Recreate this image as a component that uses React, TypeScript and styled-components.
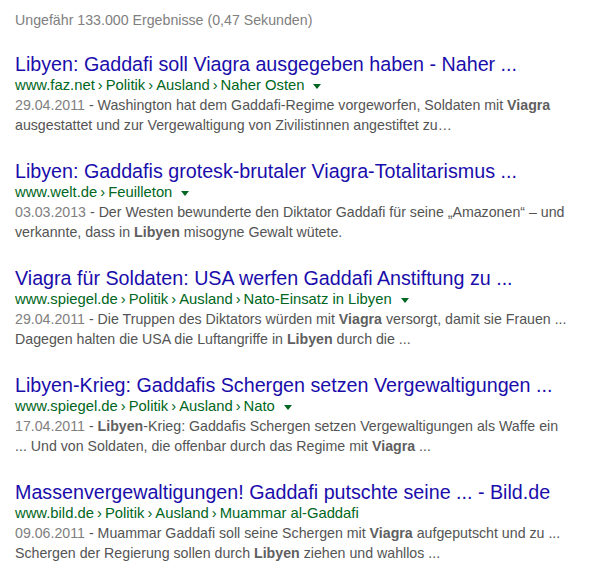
import React from "react";
import styled, { createGlobalStyle } from "styled-components";

const GlobalStyle = createGlobalStyle`
  body {
    margin: 0;
    background: #fff;
    font-family: "Liberation Sans", Arial, sans-serif;
  }
`;

const Page = styled.div`
  padding: 10px 15px 0 15px;
`;

const Stats = styled.div`
  font-size: 14.2px;
  line-height: 20px;
  color: #808080;
  margin-bottom: 23px;
`;

const ResultList = styled.div`
  display: flex;
  flex-direction: column;
  gap: 25px;
`;

const Result = styled.div`
  display: flex;
  flex-direction: column;
`;

const Title = styled.a`
  font-size: 19.7px;
  line-height: 23px;
  color: #1a0dab;
  text-decoration: none;
  white-space: nowrap;
`;

const UrlRow = styled.div`
  display: flex;
  align-items: center;
  font-size: 14.8px;
  line-height: 19px;
  color: #006621;
  white-space: nowrap;
`;

const Sep = styled.span`
  margin: 0 3px;
`;

const Arrow = styled.span`
  display: inline-block;
  margin-left: 9px;
  margin-top: 1px;
  border-top: 5px solid #006621;
  border-left: 4.5px solid transparent;
  border-right: 4.5px solid transparent;
  width: 0;
  height: 0;
`;

const Snippet = styled.div`
  font-size: 14.2px;
  line-height: 20px;
  color: #545454;

  b {
    color: #5f5f5f;
  }
`;

const Date = styled.span`
  color: #808080;
`;

type Item = {
  title: string;
  crumbs: string[];
  arrow: boolean;
  date: string;
  lines: React.ReactNode[];
};

const items: Item[] = [
  {
    title: "Libyen: Gaddafi soll Viagra ausgegeben haben - Naher ...",
    crumbs: ["www.faz.net", "Politik", "Ausland", "Naher Osten"],
    arrow: true,
    date: "29.04.2011",
    lines: [
      <>
        Washington hat dem Gaddafi-Regime vorgeworfen, Soldaten mit <b>Viagra</b>
      </>,
      <>ausgestattet und zur Vergewaltigung von Zivilistinnen angestiftet zu…</>,
    ],
  },
  {
    title: "Libyen: Gaddafis grotesk-brutaler Viagra-Totalitarismus ...",
    crumbs: ["www.welt.de", "Feuilleton"],
    arrow: true,
    date: "03.03.2013",
    lines: [
      <>Der Westen bewunderte den Diktator Gaddafi für seine „Amazonen“ – und</>,
      <>
        verkannte, dass in <b>Libyen</b> misogyne Gewalt wütete.
      </>,
    ],
  },
  {
    title: "Viagra für Soldaten: USA werfen Gaddafi Anstiftung zu ...",
    crumbs: ["www.spiegel.de", "Politik", "Ausland", "Nato-Einsatz in Libyen"],
    arrow: true,
    date: "29.04.2011",
    lines: [
      <>
        Die Truppen des Diktators würden mit <b>Viagra</b> versorgt, damit sie Frauen ...
      </>,
      <>
        Dagegen halten die USA die Luftangriffe in <b>Libyen</b> durch die ...
      </>,
    ],
  },
  {
    title: "Libyen-Krieg: Gaddafis Schergen setzen Vergewaltigungen ...",
    crumbs: ["www.spiegel.de", "Politik", "Ausland", "Nato"],
    arrow: true,
    date: "17.04.2011",
    lines: [
      <>
        <b>Libyen</b>-Krieg: Gaddafis Schergen setzen Vergewaltigungen als Waffe ein
      </>,
      <>
        ... Und von Soldaten, die offenbar durch das Regime mit <b>Viagra</b> ...
      </>,
    ],
  },
  {
    title: "Massenvergewaltigungen! Gaddafi putschte seine ... - Bild.de",
    crumbs: ["www.bild.de", "Politik", "Ausland", "Muammar al-Gaddafi"],
    arrow: false,
    date: "09.06.2011",
    lines: [
      <>
        Muammar Gaddafi soll seine Schergen mit <b>Viagra</b> aufgeputscht und zu ...
      </>,
      <>
        Schergen der Regierung sollen durch <b>Libyen</b> ziehen und wahllos ...
      </>,
    ],
  },
];

const App = () => {
  return (
    <>
      <GlobalStyle />
      <Page>
        <Stats>Ungefähr 133.000 Ergebnisse (0,47 Sekunden)</Stats>
        <ResultList>
          {items.map((item) => (
            <Result key={item.title}>
              <Title href="#">{item.title}</Title>
              <UrlRow>
                {item.crumbs.map((c, i) => (
                  <React.Fragment key={c}>
                    {i > 0 && <Sep>›</Sep>}
                    <span>{c}</span>
                  </React.Fragment>
                ))}
                {item.arrow && <Arrow />}
              </UrlRow>
              <Snippet>
                <div>
                  <Date>{item.date}</Date> - {item.lines[0]}
                </div>
                <div>{item.lines[1]}</div>
              </Snippet>
            </Result>
          ))}
        </ResultList>
      </Page>
    </>
  );
};

export default App;
